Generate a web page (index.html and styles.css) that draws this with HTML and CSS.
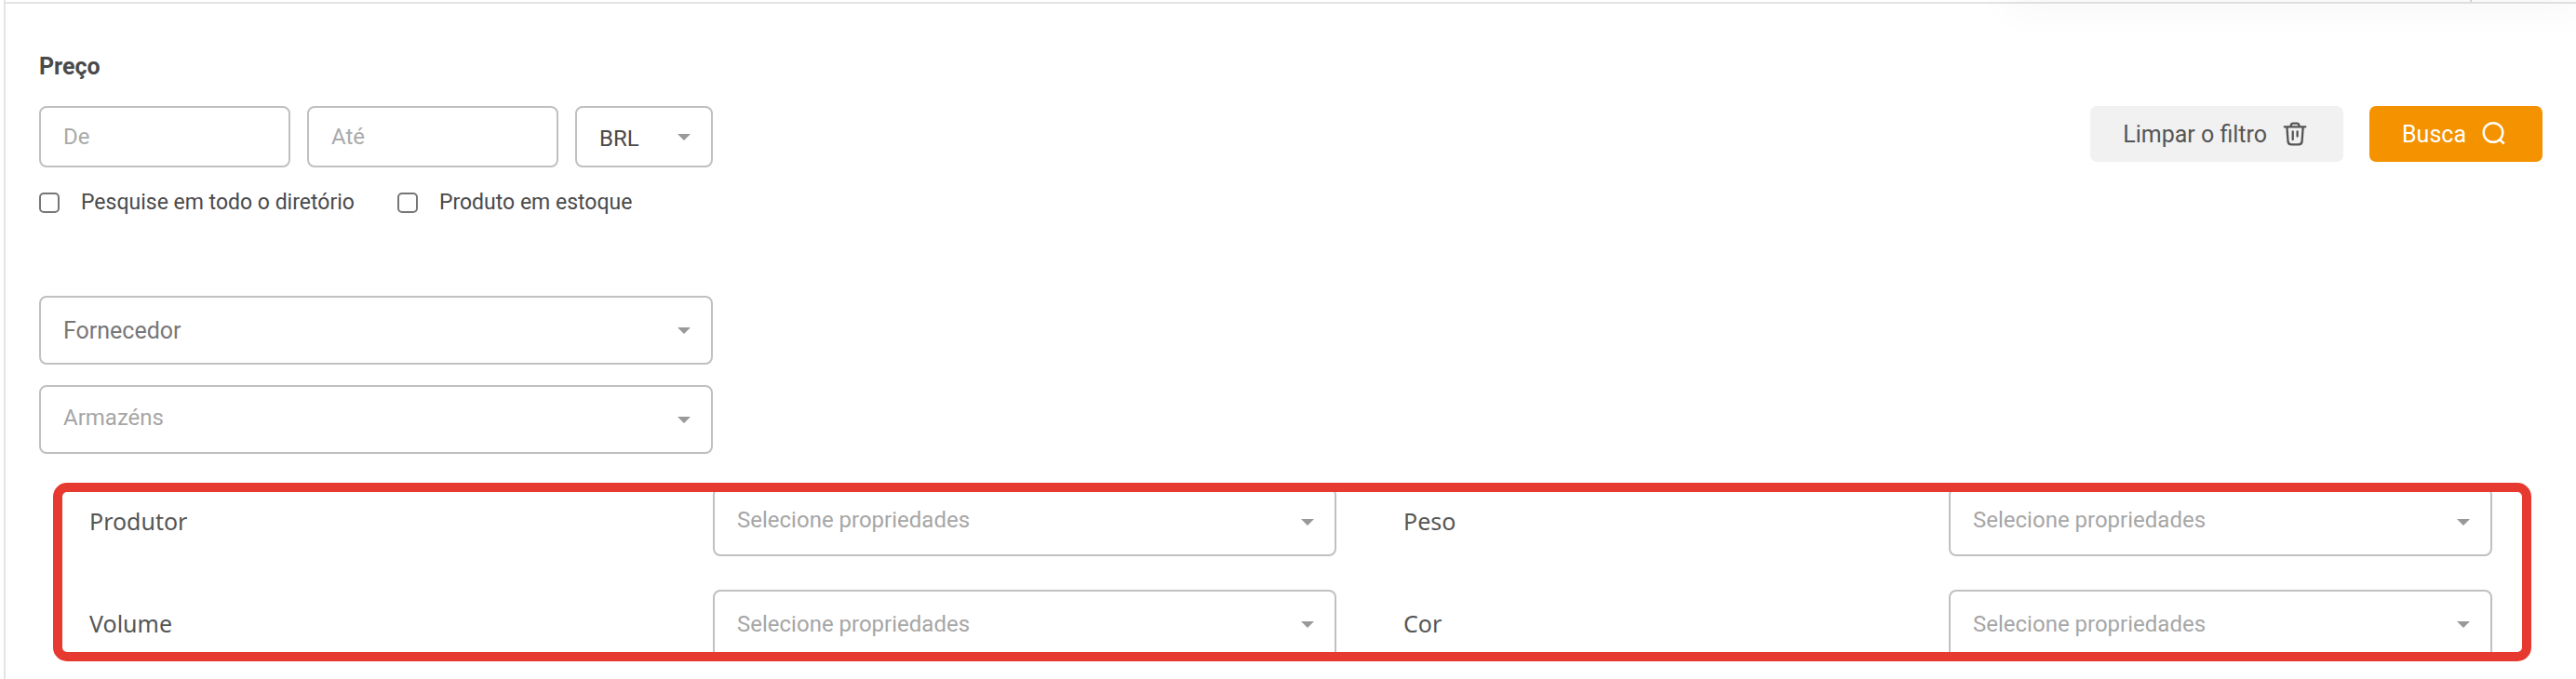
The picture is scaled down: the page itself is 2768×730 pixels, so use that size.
FILE: index.html
```html
<!DOCTYPE html>
<html lang="pt-BR">
<head>
  <meta charset="UTF-8">
  <meta name="viewport" content="width=device-width, initial-scale=1.0">
  <title>Busca de produtos</title>
  <link rel="stylesheet" href="styles.css">
</head>
<body>

  <div class="top-bar"></div>
  <div class="top-shadow"></div>

  <form class="filter-panel">
    <div class="filter-top">
      <div class="filter-main">
        <h2 class="filter-title">Preço</h2>

        <div class="price-row">
          <input class="field price-input" type="text" placeholder="De" aria-label="Preço de">
          <input class="field price-input" type="text" placeholder="Até" aria-label="Preço até">
          <select class="field select currency-select" aria-label="Moeda">
            <option>BRL</option>
          </select>
        </div>

        <div class="check-row">
          <label class="check"><input class="check-box" type="checkbox">Pesquise em todo o diretório</label>
          <label class="check"><input class="check-box" type="checkbox">Produto em estoque</label>
        </div>

        <div class="source-list">
          <select class="field select supplier-select" aria-label="Fornecedor">
            <option>Fornecedor</option>
          </select>
          <select class="field select empty" aria-label="Armazéns">
            <option>Armazéns</option>
          </select>
        </div>
      </div>

      <div class="actions">
        <button class="btn btn-clear" type="reset">
          Limpar o filtro
          <svg class="icon" viewBox="0 0 28 28" fill="none" stroke="currentColor" stroke-width="2.3" stroke-linecap="round" stroke-linejoin="round">
            <path d="M2.800 6.300h22.500M9.300 6.300l.6-2.200a2 2 0 0 1 1.900-1.500h4.500a2 2 0 0 1 1.900 1.500l.6 2.200M5.400 6.300l1.100 15.500a3.800 3.800 0 0 0 3.800 3.500h7.500a3.800 3.800 0 0 0 3.800-3.500l1.100-15.500M11.700 11.500v8.500M16.600 11.500v5"/>
          </svg>
        </button>
        <button class="btn btn-search" type="submit">
          Busca
          <svg class="icon" viewBox="0 0 28 28" fill="none" stroke="currentColor" stroke-width="2.500">
            <circle cx="13" cy="12.500" r="10.300"/>
            <path d="M19.800 19.800l5 4.700"/>
          </svg>
        </button>
      </div>
    </div>

    <div class="properties">
      <div class="properties-grid">
        <label class="property-label" for="produtor">Produtor</label>
        <select class="field select empty" id="produtor"><option>Selecione propriedades</option></select>
        <label class="property-label second" for="peso">Peso</label>
        <select class="field select empty" id="peso"><option>Selecione propriedades</option></select>

        <label class="property-label" for="volume">Volume</label>
        <select class="field select empty low" id="volume"><option>Selecione propriedades</option></select>
        <label class="property-label second" for="cor">Cor</label>
        <select class="field select empty low" id="cor"><option>Selecione propriedades</option></select>
      </div>
    </div>
  </form>

</body>
</html>
```
FILE: styles.css
```css
* {
  box-sizing: border-box;
}

body {
  margin: 0;
  min-height: 100vh;
  display: flex;
  flex-direction: column;
  position: relative;
  overflow-x: hidden;
  background-color: #fff;
  color: #4a4a4a;
  font-family: Roboto, Arial, sans-serif;
  font-size: 24px;
}

.top-bar {
  display: flex;
  justify-content: flex-end;
  height: 4px;
  margin-left: 4px;
  padding-right: 112px;
  border-left: 2px solid #e4e4e4;
  border-bottom: 2px solid #e4e4e4;
}

.top-bar::after {
  content: "";
  width: 2px;
  background-color: #d8d8d8;
}

/* soft shadow that falls from the header menu */
.top-shadow {
  position: absolute;
  top: -20px;
  right: -10px;
  width: 620px;
  height: 20px;
  box-shadow: 0 0 46px rgba(0, 0, 0, 0.08);
  pointer-events: none;
}

.filter-panel {
  flex: 1;
  margin-left: 4px;
  padding: 54px 36px 18px 36px;
  border-left: 2px solid #e4e4e4;
}

.filter-top {
  display: flex;
  justify-content: space-between;
}

.filter-main {
  width: 724px;
}

.filter-title {
  margin: 0 0 28px;
  font-size: 25px;
  line-height: 28px;
  font-weight: 700;
}

.price-row {
  display: flex;
  gap: 18px;
}

.field {
  width: 100%;
  height: 74px;
  padding: 0 24px;
  border: 2px solid #c0c0c0;
  border-radius: 8px;
  background-color: transparent;
  color: #4a4a4a;
  font-family: inherit;
  font-size: 24px;
}

.field::placeholder {
  color: #aaa;
  opacity: 1;
}

.price-input {
  flex: 1;
  min-width: 0;
  height: 66px;
}

.select {
  appearance: none;
  padding: 0 60px 4px 24px;
  background-image: url("data:image/svg+xml,%3Csvg xmlns='http://www.w3.org/2000/svg' viewBox='0 0 14 7'%3E%3Cpath d='M0 0h14l-7 7z' fill='%23999'/%3E%3C/svg%3E");
  background-repeat: no-repeat;
  background-position: right 22px center;
  background-size: 14px 7px;
}

.currency-select {
  width: 148px;
  height: 66px;
  padding: 4px 40px 0 24px;
}

.supplier-select {
  padding-bottom: 0;
  color: #777;
  font-size: 25px;
}

.empty {
  color: #a6a6a6;
}

.low {
  padding-bottom: 0;
}

.check-row {
  display: flex;
  gap: 46px;
  margin-top: 24px;
}

.check {
  display: flex;
  align-items: center;
  gap: 23px;
  font-size: 23px;
  line-height: 28px;
}

.check-box {
  appearance: none;
  width: 22px;
  height: 22px;
  margin: 0;
  border: 2px solid #767676;
  border-radius: 5px;
}

.source-list {
  display: grid;
  gap: 22px;
  margin-top: 86px;
}

.actions {
  display: flex;
  align-items: flex-start;
  gap: 28px;
  margin-top: 56px;
}

.btn {
  display: flex;
  align-items: center;
  gap: 16px;
  height: 60px;
  padding: 0 38px 0 35px;
  border: none;
  border-radius: 7px;
  font-family: inherit;
  font-size: 25px;
  cursor: pointer;
}

.btn-clear {
  background-color: #f1f1f1;
  color: #555;
}

.btn-search {
  background-color: #f49200;
  color: #fff;
}

.icon {
  width: 28px;
  height: 28px;
}

.properties {
  margin: 31px 12px 0 15px;
  padding: 0 32px 0 29px;
  border: 10px solid #e63a31;
  border-radius: 15px;
  overflow: hidden;
}

/* rows run slightly under the frame */
.properties-grid {
  display: grid;
  grid-template-columns: 670fr 670fr 658fr 584fr;
  align-items: center;
  row-gap: 36px;
  margin: -5px 0 -7px;
}

.property-label {
  padding-bottom: 2px;
  color: #555;
  font-family: "Noto Sans", sans-serif;
  font-size: 25px;
}

.second {
  padding-left: 72px;
}
```
